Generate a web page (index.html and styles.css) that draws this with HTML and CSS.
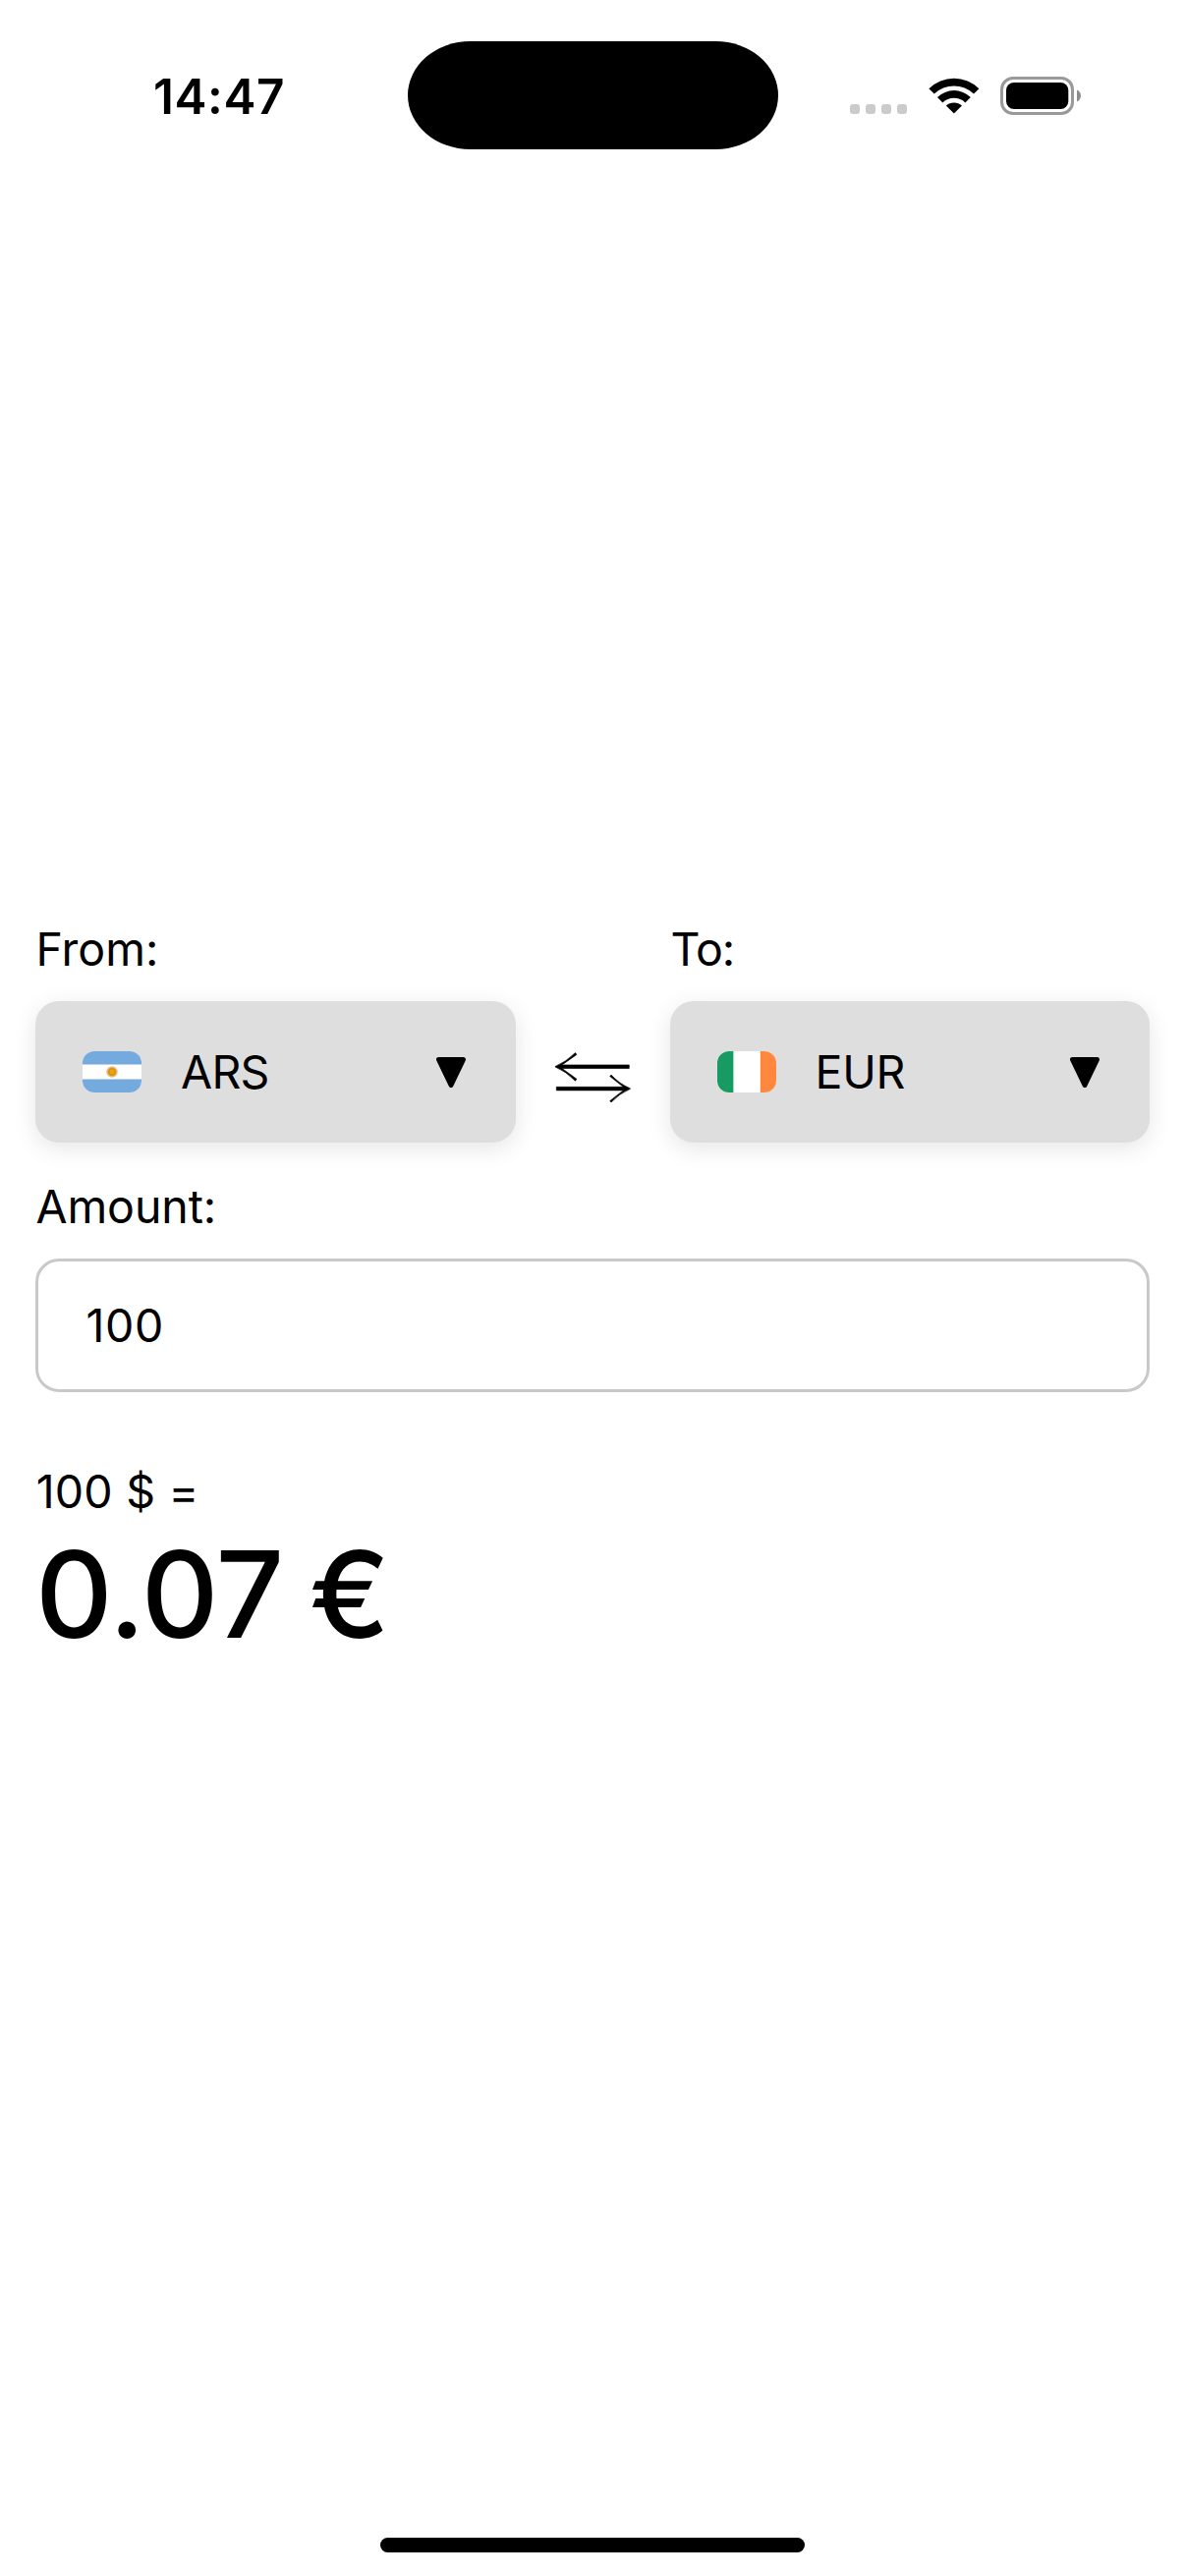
FILE: index.html
```html
<!DOCTYPE html>
<html lang="en">
<head>
<meta charset="utf-8">
<title>Currency converter</title>
<link rel="stylesheet" href="styles.css">
</head>
<body>
<div class="screen">
  <header class="status-bar">
    <div class="time">14:47</div>
    <div class="island"></div>
    <div class="indicators">
      <div class="signal"><i></i><i></i><i></i><i></i></div>
      <svg class="wifi" width="52" height="38" viewBox="0 0 52 38" aria-hidden="true">
        <path d="M0.4 12.2A36.4 36.4 0 0 1 51.4 12.2L46 17.6A28.8 28.8 0 0 0 5.8 17.6Z"/>
        <path d="M9 21A24.2 24.2 0 0 1 42.8 21L37.4 26.4A16.8 16.8 0 0 0 14.4 26.4Z"/>
        <path d="M17.8 29.6A12 12 0 0 1 34 29.6L25.9 37.6Z"/>
      </svg>
      <svg class="battery" width="84" height="39" viewBox="0 0 84 39" aria-hidden="true">
        <rect x="1.5" y="1.5" width="72" height="36" rx="11.5" fill="none" stroke="#999" stroke-width="3"/>
        <rect x="6" y="6" width="63.300" height="27" rx="8" fill="#000"/>
        <path d="M78 13.6C80.6 14.6 82 17 82 19.5S80.6 24.4 78 25.4Z" fill="#8c8c8c"/>
      </svg>
    </div>
  </header>

  <main class="converter">
    <div class="currencies">
      <div class="field">
        <div class="label">From:</div>
        <div class="select">
          <svg class="flag" width="60" height="42" viewBox="0 0 60 42" aria-hidden="true">
            <rect width="60" height="42" fill="#fff"/>
            <rect width="60" height="13.5" fill="#75aadf"/>
            <rect y="28.5" width="60" height="13.5" fill="#75aadf"/>
            <circle cx="30" cy="21" r="5.8" fill="#e5c08a"/>
            <circle cx="30" cy="21" r="4.3" fill="#d9921d"/>
            <circle cx="30" cy="21" r="2.4" fill="#f0a400"/>
          </svg>
          <span class="code code-ars">ARS</span>
          <svg class="caret" width="30" height="31" viewBox="0 0 30 31" aria-hidden="true"><path d="M2.5 2.5H27.5L15 28.5Z"/></svg>
        </div>
      </div>
      <div class="swap">
        <svg width="78" height="52" viewBox="0 0 78 52" aria-hidden="true">
          <path d="M8 13.9H76.3V17.5H8L22.9 28.2L21.5 30.2Q12 20.5 1 15.9V15.5Q12 11 21.5 1.6L22.9 3.4Z"/>
          <path d="M70.3 36.3H2.3V39.9H70.3L56.7 50.6L58 52Q66 43.3 77.5 38.3V37.9Q66 33 58 24L56.7 25.6Z"/>
        </svg>
      </div>
      <div class="field">
        <div class="label label-to">To:</div>
        <div class="select">
          <svg class="flag" width="60" height="42" viewBox="0 0 60 42" aria-hidden="true">
            <rect width="60" height="42" fill="#fff"/>
            <rect width="16.4" height="42" fill="#189b62"/>
            <rect x="43.8" width="16.2" height="42" fill="#ff883e"/>
          </svg>
          <span class="code code-eur">EUR</span>
          <svg class="caret" width="30" height="31" viewBox="0 0 30 31" aria-hidden="true"><path d="M2.5 2.5H27.5L15 28.5Z"/></svg>
        </div>
      </div>
    </div>

    <div class="label label-amount">Amount:</div>
    <div class="amount">100</div>

    <div class="result-source">100 $ =</div>
    <div class="result">0.07 €</div>
  </main>

  <footer class="home"><div class="home-bar"></div></footer>
</div>
</body>
</html>
```
FILE: styles.css
```css
* { box-sizing: border-box; }

body {
  margin: 0;
  background: #fff;
  color: #000;
  font-family: Inter, "Liberation Sans", sans-serif;
}

.screen {
  width: 1206px;
  height: 2622px;
  display: flex;
  flex-direction: column;
}

/* Status bar */
.status-bar {
  height: 194px;
  display: grid;
  grid-template-columns: 414.5px 377px 1fr;
  align-items: center;
}

.time {
  padding-left: 156px;
  font-size: 49.5px;
  font-weight: 600;
  line-height: 60px;
  letter-spacing: 0.6px;
  padding-top: 1.5px;
}

.island {
  height: 110.5px;
  border-radius: 64px / 55.25px;
  background: #000;
}

.indicators {
  display: flex;
  align-items: center;
  padding-left: 73.5px;
}

.signal {
  display: flex;
  gap: 6px;
  padding-top: 28px;
}

.signal i {
  width: 10px;
  height: 10px;
  border-radius: 3px;
  background: #cbcbcb;
}

.wifi { margin-left: 22px; }
.battery { margin-left: 21px; }

/* Converter */
.converter {
  flex: 1;
  padding: 744px 36px 0;
}

.currencies {
  display: flex;
  align-items: flex-end;
}

.field { flex: 1; }

.label {
  height: 57px;
  margin-bottom: 24px;
  padding-left: 0.5px;
  font-size: 46.5px;
  line-height: 57px;
}

.label-to {
  padding-left: 1px;
  letter-spacing: -1px;
}

.label-amount {
  margin-top: 37px;
  letter-spacing: -0.1px;
}

.select {
  height: 144px;
  padding: 0 51px 0 48px;
  display: flex;
  align-items: center;
  border-radius: 24px;
  background: #dedede;
  box-shadow: 0 6px 24px rgba(0, 0, 0, 0.1);
}

.flag { border-radius: 12px; }

.code {
  flex: 1;
  margin-left: 40px;
  font-size: 46.5px;
  line-height: 57px;
}

.code-ars { letter-spacing: -0.7px; }
.code-eur { letter-spacing: -0.3px; }

.caret path,
.swap path {
  fill: #000;
}

.caret path {
  stroke: #000;
  stroke-width: 5px;
  stroke-linejoin: round;
}

.swap {
  width: 157px;
  height: 144px;
  padding: 10px 0 0 39.5px;
  display: flex;
  align-items: center;
}

.swap path {
  stroke: #000;
  stroke-width: 0.6px;
  stroke-linejoin: round;
}

.amount {
  height: 136px;
  padding-left: 48.5px;
  border: 3px solid #c9c9c9;
  border-radius: 24px;
  font-size: 46.5px;
  line-height: 130px;
  letter-spacing: 0.6px;
}

.result-source {
  margin-top: 73px;
  padding-left: 0.7px;
  font-size: 46.5px;
  line-height: 57px;
  letter-spacing: 0.2px;
}

.result {
  margin-top: 4px;
  font-size: 122px;
  font-weight: 500;
  line-height: 144px;
  letter-spacing: -0.7px;
  word-spacing: -5.5px;
}

/* Home indicator */
.home {
  height: 39px;
  display: flex;
  justify-content: center;
}

.home-bar {
  width: 432px;
  height: 15px;
  border-radius: 7.5px;
  background: #000;
}
```
